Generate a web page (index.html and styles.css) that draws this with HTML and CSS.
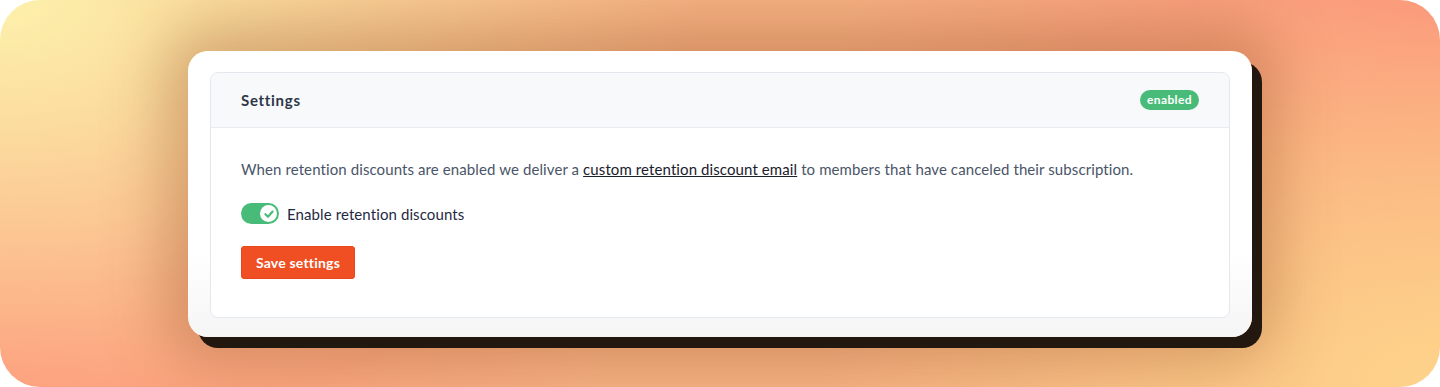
FILE: index.html
```html
<!DOCTYPE html>
<html lang="en">
<head>
  <meta charset="UTF-8">
  <meta name="viewport" content="width=device-width, initial-scale=1.0">
  <title>Retention discounts</title>
  <link rel="stylesheet" href="styles.css">
</head>
<body>
  <div class="backdrop">
    <div class="card">
      <div class="panel">
        <div class="panel-header">
          <h2 class="panel-title">Settings</h2>
          <span class="badge">enabled</span>
        </div>
        <div class="panel-body">
          <p class="description">
            When retention discounts are enabled we deliver a <a href="#" class="link">custom retention discount email</a> to members that have canceled their subscription.
          </p>
          <label class="toggle-row">
            <span class="toggle">
              <span class="knob">
                <svg width="12" height="12" viewBox="0 0 12 12">
                  <path d="M2.4 6.2 L5 8.7 L9.6 3.6" fill="none" stroke="#48bb78" stroke-width="2.2" stroke-linecap="round" stroke-linejoin="round"/>
                </svg>
              </span>
            </span>
            <span class="toggle-label">Enable retention discounts</span>
          </label>
          <button class="btn">Save settings</button>
        </div>
      </div>
    </div>
  </div>
</body>
</html>
```

FILE: styles.css
```css
body {
  margin: 0;
  background: #fff;
  font-family: 'Lato', 'Open Sans', sans-serif;
}

.backdrop {
  width: 1440px;
  height: 387px;
  box-sizing: border-box;
  padding: 51px 0 0 188px;
  border-radius: 40px;
  overflow: hidden;
  background:
    radial-gradient(ellipse 700px 420px at 0% 0%, #fdf1ac 0%, rgba(253, 241, 172, 0) 100%),
    radial-gradient(ellipse 620px 420px at 100% 100%, #fed38a 0%, rgba(254, 211, 138, 0) 100%),
    radial-gradient(ellipse 600px 380px at 0% 100%, #fd9a7b 0%, rgba(253, 154, 123, 0) 100%),
    radial-gradient(ellipse 600px 360px at 100% 0%, #fb957a 0%, rgba(251, 149, 122, 0) 100%),
    #f7b283;
}

.card {
  width: 1064px;
  height: 286px;
  box-sizing: border-box;
  padding: 21px 22px 19px;
  background: linear-gradient(#fff 70%, #f5f5f6);
  border-radius: 20px;
  box-shadow:
    10px 11px 0 #231810,
    0 0 60px 24px rgba(140, 70, 30, 0.34);
}

.panel {
  height: 100%;
  box-sizing: border-box;
  background: #fff;
  border: 1px solid #e3e8ef;
  border-radius: 8px;
  overflow: hidden;
}

.panel-header {
  height: 54px;
  display: flex;
  align-items: center;
  justify-content: space-between;
  padding: 0 30px;
  background: #f8f9fa;
  border-bottom: 1px solid #e8ecf1;
}

.panel-title {
  margin: 0;
  font-size: 15px;
  font-weight: 700;
  color: #2d3748;
  letter-spacing: 0.7px;
}

.badge {
  background: #48bb78;
  color: #fff;
  font-size: 12px;
  font-weight: 700;
  letter-spacing: 0.4px;
  padding: 2px 7px 3px;
  border-radius: 10px;
}

.panel-body {
  padding: 31px 30px 38px;
}

.description {
  margin: 0 0 24px;
  font-size: 15px;
  line-height: 20px;
  letter-spacing: 0.1px;
  color: #4a5568;
}

.link {
  color: #1a202c;
  text-decoration: underline;
}

.toggle-row {
  display: flex;
  align-items: center;
  gap: 8px;
  margin-bottom: 22px;
}

.toggle {
  width: 38px;
  height: 21px;
  box-sizing: border-box;
  padding: 2px;
  background: #48bb78;
  border-radius: 11px;
  display: flex;
  justify-content: flex-end;
}

.knob {
  width: 17px;
  height: 17px;
  border-radius: 50%;
  background: #fff;
  display: flex;
  align-items: center;
  justify-content: center;
}

.toggle-label {
  font-size: 15px;
  letter-spacing: 0.1px;
  color: #1f2a44;
}

.btn {
  display: block;
  width: 114px;
  height: 33px;
  background: #f04e23;
  color: #fff;
  font-family: inherit;
  font-size: 14px;
  font-weight: 700;
  letter-spacing: 0.2px;
  border: 1px solid #e8461c;
  border-radius: 3px;
  cursor: pointer;
}
```
